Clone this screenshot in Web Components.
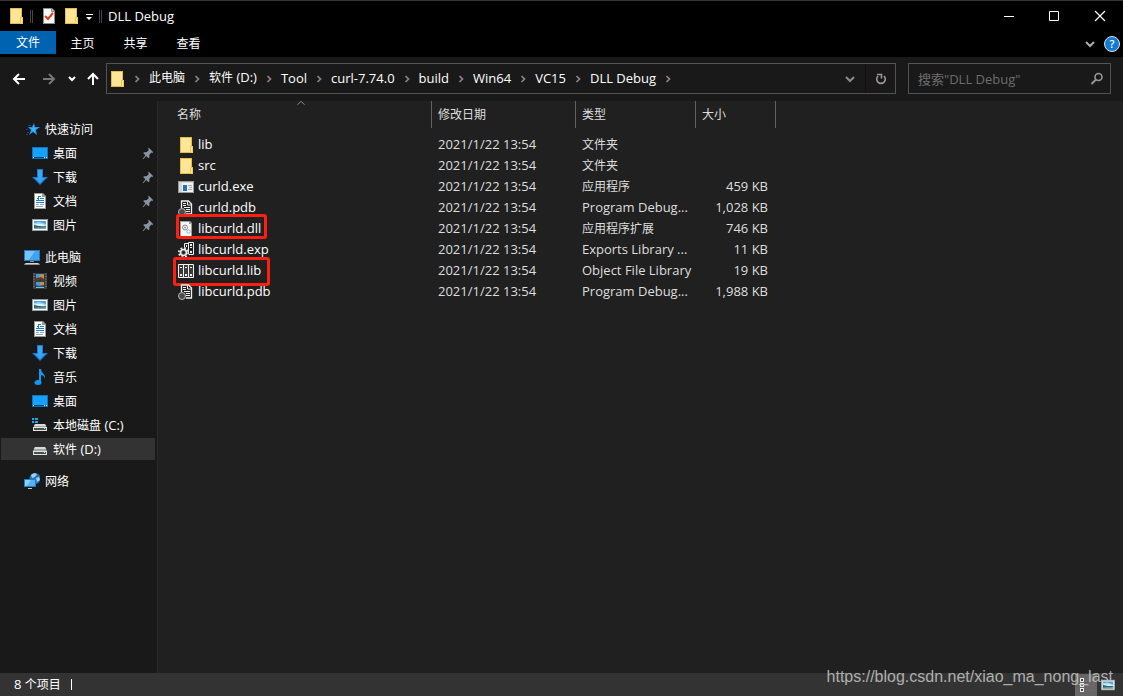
<!DOCTYPE html>
<html lang="zh-CN">
<head>
<meta charset="utf-8">
<title>DLL Debug</title>
<style>
html, body { margin: 0; height: 100%; background: #202020; }
body { font: 13px/20px "Open Sans", "Noto Sans CJK SC", sans-serif; color: #fff; overflow: hidden; }
</style>
</head>
<body>
<explorer-window></explorer-window>
<script>
const base = `
  *, *::before, *::after { box-sizing: border-box; }
  button, input { font: inherit; color: inherit; background: none; border: 0; padding: 0; margin: 0; outline: none; }
  a { color: inherit; text-decoration: none; }
  .c { font-size: 12px; }
`;
/* Chinese runs are set one size smaller than Latin ones */
const mix = t => t.replace(/[\u4e00-\u9fff]+/g, '<span class="c">$&</span>');

function define(name, css, render) {
  customElements.define(name, class extends HTMLElement {
    constructor() {
      super();
      this.attachShadow({ mode: 'open' });
    }
    connectedCallback() {
      this.shadowRoot.innerHTML = `<style>${base}${css}</style>${render(this)}`;
    }
  });
}

const picture = `<path fill="#999" d="M0 2h16v12H0z"/><path fill="#fff" d="M1 3h14v10H1z"/><path fill="#4ba3e3" d="M2 4h12v4H2z"/><path fill="#a9d4f2" d="M2 6l5-1 7 2v2H2z"/><path fill="#e4f2fa" d="M4 7h6l4 2H2z"/><path fill="#2e6371" d="M2 8c3 0 5 2 12 1v3H2z"/><path fill="#7aa9ad" d="M2 11c5-1 8 0 12-1v2H2z"/>`;
const pcScreen = `<path fill="#2a78b8" d="M0 1h16v11H0z"/><path fill="#3ba4f3" d="M1 2h14v9H1z"/><path fill="#79c1fa" d="M1 2h10L5 11H1z"/>`;
const ICONS = {
  folder: `<path fill="#e5bd45" d="M2 0h12v9h1v7H2z"/><path fill="#ffe596" d="M3 1h10v14H3z"/><path fill="#f1cb55" d="M12 9h3v7h-3z"/><path fill="#ffe798" d="M13 10h1v5h-1z"/>`,
  check: `<path fill="#8c8c8c" d="M2 0h9l3 3v13H2z"/><path fill="#fafafa" d="M3 1h7v3h3v11H3z"/><path fill="#d5d5d5" d="M11 1l2 2h-2z"/><path fill="none" stroke="#e23b1d" stroke-width="2" d="M4 8l3 3 5-6"/>`,
  star: `<path fill="#2394e8" d="M10 2l1 4h5l-4 3 1 5-4-3-4 3 2-5-3-3h4z"/><path fill="#45b4ff" d="M9.500 4l1 3 3 .3-3 1.500.6 3-2.100-2-2 1 1-2.500-2-1.300h3z"/><path stroke="#174c83" d="M4 4.500h3M2 8.500h2M3 11.500h2M2 13.500h2"/>`,
  desktop: `<path fill="#1272be" d="M0 2h16v12H0z"/><path fill="#13a2ff" d="M1 3h14v9H1z"/><path fill="#0b477e" d="M1 12h14v1H1z"/><path fill="#fff" d="M1 12h1v1H1zM12 12h1v1h-1zM14 12h1v1h-1z"/>`,
  download: `<path fill="#1e7bd2" d="M5 0h6v8h5l-8 8-8-8h5z"/><path fill="#3aa6f7" d="M6 1h4v8h3l-5 5-5-5h3z"/>`,
  doc: `<path fill="#999" d="M2 0h9l3 3v13H2z"/><path fill="#fff" d="M3 1h7v3h3v11H3z"/><path stroke="#1d83cc" d="M7 3.500h2M5 5.500h2M8 5.500h4M4 7.500h8M4 9.500h8"/><path fill="#1d83cc" d="M6 3h1v4H6z"/><path stroke="#9aa7b0" d="M4 11.500h3M8 11.500h4M4 13.500h7"/>`,
  picture,
  pc: `${pcScreen}<path fill="#8d959b" d="M6 12h4v1H6zM1 14h14l1 2H0z"/><path fill="#d3d8dc" d="M2 14h12v1H2z"/>`,
  video: `<path fill="#3b3b3b" d="M1 0h14v16H1z"/><path stroke="#9b9b9b" stroke-dasharray="1 1.500" d="M2 0.500v15M14 .5v15"/><path fill="#3c9be8" d="M4 1h8v6H4zM4 9h8v6H4z"/><path fill="#d78935" d="M7 3l3-2 2 2v2H7z"/><path fill="#5c3a24" d="M4 5l5-1 3 2v1H4z"/><path fill="#d78935" d="M8 9h4v3H8z"/><path fill="#284d70" d="M4 12l3 1 5-1v2H4z"/><path fill="#77c0ef" d="M4 14h8v1H4z"/>`,
  music: `<ellipse cx="6" cy="13.500" rx="3.500" ry="2.500" fill="#1298ee"/><path fill="#1298ee" d="M7 0h2c0 4 5 5 4 10-1-3-2-4-4-4v8H7z"/>`,
  cdrive: `<path fill="#a2a6a7" d="M3 7h10l2 4H1z"/><path fill="#d7d9da" d="M3 7h10l1 2H2z"/><path fill="#e2e2e2" d="M1 10h14v4H1z"/><path fill="#4b4e4f" d="M2 11h12v2H2z"/><path fill="#8df2af" d="M12 11h1v1h-1z"/><path fill="#191919" d="M0 1h8v5H0z"/><path fill="#1aa5fa" d="M0 1h2v2H0zM3 1h3v2H3zM0 4h2v2H0zM3 4h3v2H3z"/>`,
  drive: `<path fill="#a2a6a7" d="M3 6h10l2 4H1z"/><path fill="#d7d9da" d="M3 6h10l1 2H2z"/><path fill="#e2e2e2" d="M1 10h14v4H1z"/><path fill="#4b4e4f" d="M2 11h12v2H2z"/><path fill="#8df2af" d="M12 11h1v1h-1z"/>`,
  network: `<circle cx="11" cy="5.500" r="5.500" fill="#2376b4"/><path fill="#9dd0ee" d="M7 2l3-2 3 1-2 3-3 1zM12 5l3-1 1 3-3 2z"/><path fill="#207ec8" d="M0 6h12v8H0z"/><path fill="#52b2f8" d="M1 7h10v6H1z"/><path fill="#8fcdfc" d="M1 7h6l-4 6H1z"/><path fill="#c2c9cd" d="M4 15h4v1H4z"/>`,
  exe: `<path fill="#9a9a9a" d="M0 2h16v12H0z"/><path fill="#f2f2f2" d="M1 4h14v9H1z"/><path fill="#d9d9d9" d="M1 3h14v1H1z"/><path fill="#1a72c8" d="M5 6h4v6H5z"/><path fill="#d6d6d6" d="M1 4h3v9H1z"/><path stroke="#a5a5a5" d="M10 6.500h4M11 8.500h3M10 10.500h4"/>`,
  pdb: `<path fill="#202020" stroke="#f0f0f0" stroke-width="1.300" d="M3.500 8V1h7l3 3v10H8"/><path fill="none" stroke="#f0f0f0" d="M9.500 1.500v3.500h4"/><path fill="#f0f0f0" d="M5 3h3v1H5zM5 5h3v1H5zM6 7h6v1H6zM8 9h4v1H8zM8 11h4v1H8z"/><circle cx="4" cy="12" r="3.500" fill="#4a4a4a" stroke="#b8b8b8"/>`,
  dll: `<path fill="#9c9c9c" d="M2 0h10l2 2v14H2z"/><path fill="#f7f7f7" d="M3 1h8v2h2v12H3z"/><circle cx="7" cy="6.500" r="2.500" fill="none" stroke="#8a8a8a"/><circle cx="7" cy="6.500" r="1" fill="#999"/><circle cx="10.500" cy="10.500" r="1.700" fill="none" stroke="#8eb7d2"/>`,
  exp: `<path fill="#202020" stroke="#f0f0f0" d="M6.500 5V1.500h4V.5h5v12H11M10.500 1v11"/><path fill="#f0f0f0" d="M8 3h1v2H8zM12 2h2v2h-2zM12 5h2v1h-2zM12 9h2v2h-2z"/><circle cx="5.500" cy="10.500" r="4.700" fill="#202020" stroke="#f0f0f0" stroke-width="1.600" stroke-dasharray="1.900 1.800"/><circle cx="5.500" cy="10.500" r="3" fill="#4a4a4a" stroke="#f0f0f0" stroke-width="1.600"/><circle cx="5.500" cy="10.500" r="1.200" fill="#202020"/>`,
  lib: `<path fill="#3a3a3a" stroke="#f4f4f4" d="M.5 1.500h5v13h-5zM5.500 1.500h5v13h-5zM10.500 1.500h5v13h-5z"/><path fill="#f4f4f4" d="M2 4h2v1H2zM7 4h2v1H7zM12 4h2v1h-2zM2 11h2v2H2zM7 11h2v2H7zM12 11h2v2h-2z"/>`,
  pin: `<path fill="#8795a6" d="M9 2l5 5-1 1-1-.5-2.500 2.500v3l-1 1L6 11.500 2.500 15H2v-.5L5 10.500 2.500 8l1-1h3L9 4.500 8 3z"/>`,
  back: `<path fill="none" stroke="#fff" stroke-width="2" d="M14 8H3M8 3L3 8l5 5"/>`,
  forward: `<path fill="none" stroke="#777" stroke-width="2" d="M2 8h11M8 3l5 5-5 5"/>`,
  up: `<path fill="none" stroke="#fff" stroke-width="2" d="M8 14V3M3 8l5-5 5 5"/>`,
  small: `<path fill="none" stroke="#fff" stroke-width="2" d="M5 6l3 3 3-3"/>`,
  down: `<path fill="none" stroke="#8c8c8c" stroke-width="2" d="M4 6l4 4 4-4"/>`,
  ribbon: `<path fill="none" stroke="#a8b0b0" stroke-width="2" d="M4 6l4 4 4-4"/>`,
  right: `<path fill="none" stroke="#8c8486" stroke-width="1.700" d="M6.500 5l3 3-3 3"/>`,
  refresh: `<path fill="none" stroke="#a09496" stroke-width="1.600" d="M11 5a4.300 4.300 0 1 1-6 0M4 3.500h4.500v4"/>`,
  search: `<circle cx="10.500" cy="6" r="3.500" fill="none" stroke="#989898" stroke-width="1.600"/><path stroke="#989898" stroke-width="2" d="M8 8.500L3.500 13"/>`,
  help: `<circle cx="8" cy="8" r="7.500" fill="#1279d4" stroke="#e6e6e6"/>`,
  min: `<path stroke="#fff" d="M4 8.500h10"/>`,
  max: `<path fill="none" stroke="#fff" d="M3.500 3.500h9v9h-9z"/>`,
  close: `<path stroke="#fff" stroke-width="1.200" d="M3 3l10 10M13 3L3 13"/>`,
  custom: `<path fill="#fff" d="M5 6h7v1H5zM5 9h6l-3 3z"/>`,
  sort: `<path fill="none" stroke="#a0a0a0" d="M4 10l4-4 4 4"/>`,
  details: `<path fill="#eee" d="M2 1h4v4H2zM2 6h4v4H2zM2 11h4v4H2z"/><path fill="#444" d="M3 2h2v2H3zM3 7h2v2H3zM3 12h2v2H3z"/><path stroke="#8a6068" stroke-dasharray="4 1" d="M7 3.500h9M7 8.500h9M7 13.500h9"/>`
};

define('fx-icon', `
  :host { display: block; flex: none; width: 16px; height: 16px; }
  svg { display: block; width: 100%; height: 100%; }
`, el => `<svg viewBox="0 0 16 16" aria-hidden="true">${ICONS[el.getAttribute('name')]}</svg>`);

define('title-bar', `
  :host { display: flex; align-items: center; height: 31px; background: #000; border-top: 1px solid #333; padding-left: 8px; }
  i { width: 3px; height: 13px; border: solid #444; border-width: 0 1px; }
  .quick { display: flex; align-items: center; gap: 6px; }
  .tools { display: flex; align-items: center; gap: 6px; padding-left: 2px; }
  button { display: block; }
  .more { margin: 0 -4px; }
  h1 { flex: 1; margin: 0; padding-left: 6px; font: inherit; }
  .caption { display: flex; }
  .caption button { width: 46px; height: 30px; display: grid; place-items: center; }
`, () => `
  <div class="quick">
    <fx-icon name="folder"></fx-icon><i></i>
    <div class="tools">
      <button aria-label="属性"><fx-icon name="check"></fx-icon></button>
      <button aria-label="新建文件夹"><fx-icon name="folder"></fx-icon></button>
      <button class="more" aria-label="自定义快速访问工具栏"><fx-icon name="custom"></fx-icon></button>
    </div>
    <i></i>
  </div>
  <h1>DLL Debug</h1>
  <div class="caption">
    <button aria-label="最小化"><fx-icon name="min"></fx-icon></button>
    <button aria-label="最大化"><fx-icon name="max"></fx-icon></button>
    <button aria-label="关闭"><fx-icon name="close"></fx-icon></button>
  </div>`);

define('ribbon-tabs', `
  :host { display: flex; align-items: flex-start; height: 26px; background: #000; font-size: 12px; }
  .tabs { display: flex; flex: 1; }
  .tabs button { width: 53px; height: 26px; line-height: 26px; }
  .tabs .file { width: 56px; height: 23px; line-height: 24px; background: #0063b1; }
  .end { display: flex; align-items: center; gap: 6px; height: 26px; padding-right: 3px; }
  .help { position: relative; width: 16px; height: 16px; font-size: 11px; font-weight: 600; line-height: 16px; }
  .help fx-icon { position: absolute; inset: 0; }
  .help span { position: relative; }
`, () => `
  <div class="tabs"><button class="file">文件</button><button>主页</button><button>共享</button><button>查看</button></div>
  <div class="end"><button aria-label="展开功能区"><fx-icon name="ribbon"></fx-icon></button>
  <button class="help" aria-label="帮助"><fx-icon name="help"></fx-icon><span>?</span></button></div>`);

define('address-bar', `
  :host { display: flex; height: 44px; padding: 6px 12px 7px 11px; background: #191919; }
  .nav { display: flex; align-items: center; width: 95px; }
  .nav button:nth-child(1) { margin-right: 14px; }
  .nav button:nth-child(2) { margin-right: 7px; }
  .nav button:nth-child(3) { margin-right: 5px; }
  .nav button { display: block; }
  .path { display: flex; flex: 1; min-width: 0; border: 1px solid #535353; }
  nav { display: flex; align-items: center; flex: 1; min-width: 0; padding-left: 2px; overflow: hidden; white-space: nowrap; line-height: 18px; }
  nav a { padding-bottom: 2px; }
  .sep { width: 24px; display: grid; place-items: center; }
  .path button { width: 30px; display: grid; place-items: center; }
  .path .refresh { border-left: 1px solid #111; }
  label { display: flex; align-items: center; width: 203px; margin-left: 12px; padding: 0 6px 0 9px; border: 1px solid #535353; }
  input { flex: 1; min-width: 0; height: 28px; }
  input::placeholder { color: #6d6d6d; opacity: 1; }
`, () => {
  const sep = '<span class="sep"><fx-icon name="right"></fx-icon></span>';
  const crumbs = ['此电脑', '软件 (D:)', 'Tool', 'curl-7.74.0', 'build', 'Win64', 'VC15', 'DLL Debug'];
  return `
  <div class="nav">
    <button aria-label="后退"><fx-icon name="back"></fx-icon></button>
    <button aria-label="前进"><fx-icon name="forward"></fx-icon></button>
    <button aria-label="最近浏览的位置"><fx-icon name="small"></fx-icon></button>
    <button aria-label="上移"><fx-icon name="up"></fx-icon></button>
  </div>
  <div class="path">
    <nav><fx-icon name="folder"></fx-icon>${sep}${crumbs.map(c => `<a href="#">${mix(c)}</a>${sep}`).join('')}</nav>
    <button aria-label="以前的位置"><fx-icon name="down"></fx-icon></button>
    <button class="refresh" aria-label="刷新"><fx-icon name="refresh"></fx-icon></button>
  </div>
  <label><input type="text" aria-label="搜索" placeholder='搜索"DLL Debug"'><fx-icon name="search"></fx-icon></label>`;
});

define('nav-item', `
  :host { display: block; height: 24px; padding: 1px 2px 1px 1px; }
  a { display: flex; align-items: center; gap: 5px; height: 22px; padding: 0 0 0 23px; white-space: nowrap; }
  :host([child]) a { padding-left: 31px; }
  :host([current]) a { background: #333; }
  .label { flex: 1; line-height: 22px; }
  .pin { width: 14px; height: 14px; }
`, el => `<a href="#"><fx-icon name="${el.getAttribute('icon')}"></fx-icon><span class="label">${mix(el.getAttribute('label'))}</span>${el.hasAttribute('pinned') ? '<fx-icon class="pin" name="pin"></fx-icon>' : ''}</a>`);

define('nav-pane', `
  :host { display: flex; flex-direction: column; gap: 8px; width: 158px; padding-top: 16px; background: #191919; border-right: 1px solid #2b2b2b; overflow: hidden; }
`, () => {
  const groups = [
    [['star', '快速访问'], ['desktop', '桌面', 'pinned'], ['download', '下载', 'pinned'], ['doc', '文档', 'pinned'], ['picture', '图片', 'pinned']],
    [['pc', '此电脑'], ['video', '视频'], ['picture', '图片'], ['doc', '文档'], ['download', '下载'], ['music', '音乐'], ['desktop', '桌面'], ['cdrive', '本地磁盘 (C:)'], ['drive', '软件 (D:)', 'current']],
    [['network', '网络']]
  ];
  return groups.map(g => `<div>${g.map(([icon, label, flag = ''], i) => `<nav-item icon="${icon}" label="${label}" ${i ? 'child' : ''} ${flag}></nav-item>`).join('')}</div>`).join('');
});

define('file-list', `
  :host { display: block; flex: 1; min-width: 0; padding-left: 13px; background: #202020; overflow: hidden; }
  table { table-layout: fixed; width: 605px; border-collapse: separate; border-spacing: 0; color: #dedede; }
  th { position: relative; height: 27px; padding: 0 0 0 6px; border-right: 1px solid #636363; text-align: left; font-weight: 400; font-size: 12px; line-height: 26px; }
  th fx-icon { position: absolute; top: -6px; left: 50%; width: 14px; height: 16px; margin-left: -7px; }
  thead::after { content: ""; display: block; height: 6px; }
  td { height: 21px; padding: 0 0 0 6px; line-height: 21px; white-space: nowrap; }
  td:nth-child(4) { text-align: right; padding: 0 8px 0 0; }
  .file { position: relative; display: flex; width: max-content; align-items: center; gap: 4px; height: 21px; color: #fff; margin-left: 1px; }
  .mark::after { content: ""; position: absolute; border: 3px solid #fe1f13; border-radius: 3px; }
  .dll::after { inset: -4px -6px 0 -2px; }
  .lib::after { inset: -3px -9px -5px -5px; }
`, () => {
  const rows = [
    ['folder', 'lib', '文件夹', ''],
    ['folder', 'src', '文件夹', ''],
    ['exe', 'curld.exe', '应用程序', '459 KB'],
    ['pdb', 'curld.pdb', 'Program Debug...', '1,028 KB'],
    ['dll', 'libcurld.dll', '应用程序扩展', '746 KB'],
    ['exp', 'libcurld.exp', 'Exports Library ...', '11 KB'],
    ['lib', 'libcurld.lib', 'Object File Library', '19 KB'],
    ['pdb', 'libcurld.pdb', 'Program Debug...', '1,988 KB']
  ];
  return `<table>
  <colgroup><col style="width:261px"><col style="width:144px"><col style="width:120px"><col style="width:80px"></colgroup>
  <thead><tr><th>名称<fx-icon name="sort"></fx-icon></th><th>修改日期</th><th>类型</th><th>大小</th></tr></thead>
  <tbody>${rows.map(([icon, name, type, size]) => `<tr><td><span class="file ${icon === 'dll' || icon === 'lib' ? 'mark ' + icon : ''}"><fx-icon name="${icon}"></fx-icon>${name}</span></td><td>2021/1/22 13:54</td><td>${mix(type)}</td><td>${size}</td></tr>`).join('')}</tbody>
  </table>`;
});

define('status-bar', `
  :host { display: flex; align-items: center; height: 23px; padding-left: 14px; background: #333; }
  .count { flex: 1; display: flex; align-items: center; gap: 10px; }
  .count i { width: 1px; height: 11px; background: #fff; }
  button { display: grid; place-items: center; width: 22px; height: 22px; }
  .on { background: #666; }
  .large { margin-right: 4px; }
  .large fx-icon { width: 14px; height: 14px; }
`, () => `<div class="count"><span>${mix('8 个项目')}</span><i></i></div>
  <button class="on" aria-label="详细信息"><fx-icon name="details"></fx-icon></button>
  <button class="large" aria-label="大缩略图"><fx-icon name="picture"></fx-icon></button>`);

define('explorer-window', `
  :host { position: relative; display: flex; flex-direction: column; height: 100vh; }
  main { display: flex; flex: 1; min-height: 0; }
  .credit { position: absolute; right: 10px; bottom: 9px; font: 16px/20px "Liberation Sans", sans-serif; color: #c4c4c4; opacity: .85; }
`, () => `<title-bar></title-bar><ribbon-tabs></ribbon-tabs><address-bar></address-bar>
  <main><nav-pane></nav-pane><file-list></file-list></main>
  <status-bar></status-bar>
  <span class="credit">https://blog.csdn.net/xiao_ma_nong_last</span>`);
</script>
</body>
</html>
